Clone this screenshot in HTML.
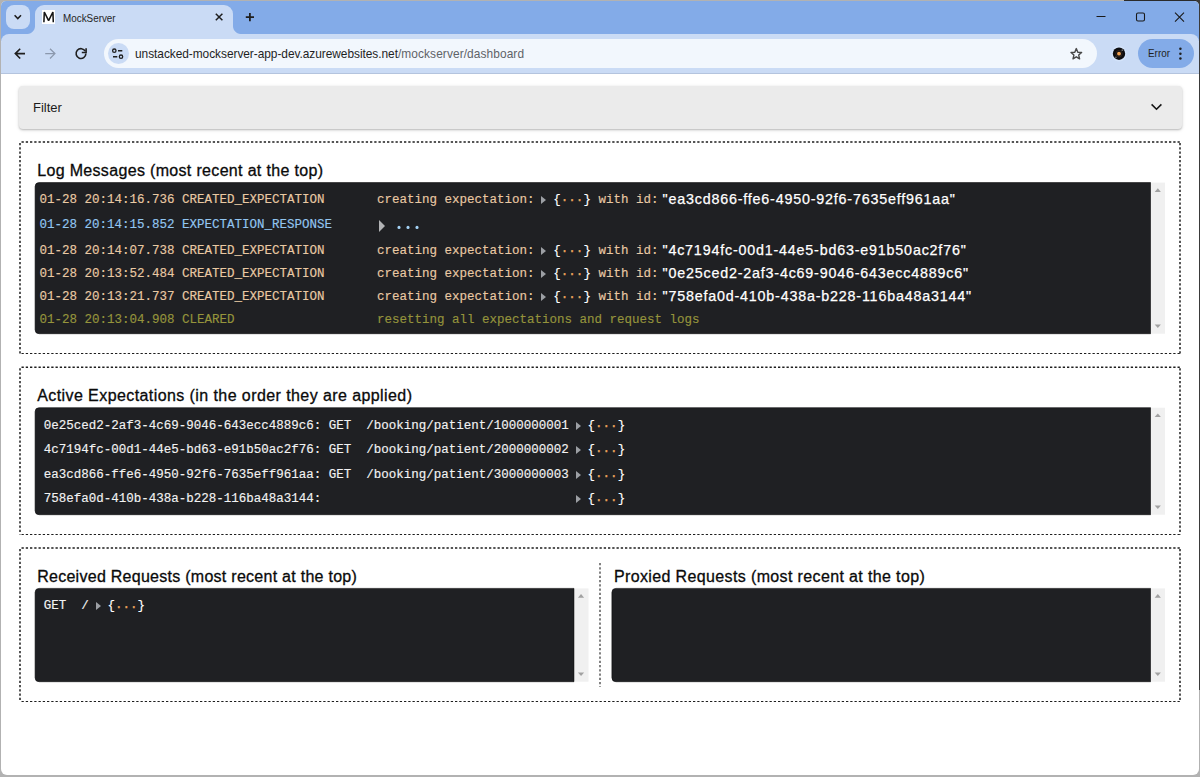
<!DOCTYPE html>
<html>
<head>
<meta charset="utf-8">
<title>MockServer</title>
<style>
*{box-sizing:border-box;margin:0;padding:0}
html,body{width:1200px;height:777px;overflow:hidden;background:#b2b2b2;font-family:"Liberation Sans",sans-serif;}
#win{position:absolute;left:1px;top:1px;width:1198px;height:774px;background:#fff;border-radius:5px 5px 6px 6px;overflow:hidden}
#strip{position:absolute;left:0;top:0;width:1198px;height:40px;background:#83abe8}
#toolbar{position:absolute;left:0;top:33px;width:1198px;height:39px;background:#cadbf5;border-radius:8px 8px 0 0}
#tbline{position:absolute;left:0;top:72px;width:1198px;height:1px;background:#b4c4de}
.abs{position:absolute}
#tabsearch{left:5px;top:4px;width:24px;height:24px;border-radius:8px;background:#cadbf5}
#tab{left:34px;top:4px;width:198px;height:30px;background:#cadbf5;border-radius:9px 9px 0 0}
#tabL{left:26px;top:25px;width:8px;height:8px;background:radial-gradient(circle at 0 0,rgba(0,0,0,0) 7.5px,#cadbf5 8.5px)}
#tabR{left:232px;top:25px;width:8px;height:8px;background:radial-gradient(circle at 100% 0,rgba(0,0,0,0) 7.5px,#cadbf5 8.5px)}
#fav{left:41px;top:9px;width:13px;height:14px;background:#fff}
#tabtitle{left:62px;top:9.5px;font-size:11.5px;color:#262626;line-height:14px;white-space:nowrap;transform:scaleX(.858);transform-origin:0 0}
#omni{left:103px;top:38px;width:993px;height:29px;border-radius:15px;background:#f2f7fd}
#siteinfo{left:107px;top:42px;width:21px;height:21px;border-radius:11px;background:#cadbf5}
#url{left:134px;top:45px;font-size:13px;line-height:16px;color:#1f1f1f;white-space:nowrap;transform:scaleX(.915);transform-origin:0 0}
#url span{color:#5f6368}
#errpill{left:1137px;top:38px;width:56px;height:29px;border-radius:15px;background:#83abe8}
#errtxt{left:1146.8px;top:45px;font-size:11px;line-height:14px;color:#1f1f1f;transform:scaleX(.9);transform-origin:0 0}
svg{position:absolute;overflow:visible}

/* page */
#filter{left:18px;top:85px;width:1162.5px;height:43px;background:#ebebeb;border-radius:4px;box-shadow:0 1px 2px rgba(0,0,0,.22),0 1px 4px rgba(0,0,0,.10)}
#filter div{position:absolute;left:14px;top:14px;font-size:13px;line-height:16px;color:#1c1c1c}
.sec{position:absolute;left:19px;width:1161px;border:1px dashed #222}
.ttl{position:absolute;font-size:16px;line-height:20px;color:#0a0a0a;white-space:nowrap;-webkit-text-stroke:0.3px #0a0a0a}
.box{position:absolute;background:#1f2023;border-radius:4px 0 0 4px}
.sb{position:absolute;width:15px;background:#f0f0f0}
.mono{font-family:"Liberation Mono",monospace;font-size:12.5px;line-height:15px;white-space:pre;position:absolute;margin-top:1px;-webkit-text-stroke:0.15px currentColor}
.c1{color:#e9c9a3}.c2{color:#92c5f0}.c3{color:#95943c}.w{color:#f2f2f2}
.id{font-family:"Liberation Sans",sans-serif;font-size:14.3px;color:#fff;position:absolute;white-space:pre;line-height:18px;letter-spacing:.81px;-webkit-text-stroke:0.25px #fff}
.tri{position:absolute;width:0;height:0;border-left:5px solid #8a8a8a;border-top:4px solid transparent;border-bottom:4px solid transparent}
.t{display:inline-block;width:18.75px;height:9px;position:relative;vertical-align:-1px}.t:after{content:"";position:absolute;left:6.75px;top:1.2px;border-left:5px solid #9c9fa4;border-top:4px solid transparent;border-bottom:4px solid transparent}
.br{color:#fff}.dot{color:#eba55c;position:relative;top:-1.3px;-webkit-text-stroke:0.3px #eba55c}
</style>
</head>
<body>
<div style="position:absolute;left:1124px;top:0;width:76px;height:8px;background:#2b2b2b"></div>
<div style="position:absolute;left:1196px;top:0;width:4px;height:690px;background:#3a3a3a"></div>
<div id="win">
  <div id="strip"></div>
  <div id="toolbar"></div>
  <div id="tbline"></div>
  <div id="tabsearch" class="abs"></div>
  <div id="tab" class="abs"></div><div id="tabL" class="abs"></div><div id="tabR" class="abs"></div>
  <div id="fav" class="abs"></div>
  <div id="tabtitle" class="abs">MockServer</div>
  <div id="omni" class="abs"></div>
  <div id="siteinfo" class="abs"></div>
  <div id="url" class="abs"><b style="font-weight:normal;letter-spacing:-.047px">unstacked-mockserver-app-dev.azurewebsites.net</b><span style="letter-spacing:.1px">/mockserver/dashboard</span></div>
  <div id="errpill" class="abs"></div>
  <div id="errtxt" class="abs">Error</div>

  <svg class="abs" style="left:-1px;top:-1px" width="1200" height="80" viewBox="0 0 1200 80" fill="none" stroke-linecap="butt">
    <!-- tab search chevron -->
    <path d="M14.6 15.3 L17.8 18.5 L21 15.3" stroke="#1f1f1f" stroke-width="1.6"/>
    <!-- favicon M -->
    <path d="M43.9 22.3 L44.3 12 L48.6 20.6 L52.9 12 L53.3 22.3" stroke="#151515" stroke-width="1.55" stroke-linejoin="bevel"/>
    <!-- tab close -->
    <path d="M215.8 13.7 L222.4 20.3 M222.4 13.7 L215.8 20.3" stroke="#1f1f1f" stroke-width="1.5"/>
    <!-- new tab plus -->
    <path d="M245.8 17.1 H254 M249.9 13 V21.2" stroke="#1f1f1f" stroke-width="1.8"/>
    <!-- back -->
    <path d="M25 53.6 H16 M20.2 48.7 L15.3 53.6 L20.2 58.5" stroke="#1f1f1f" stroke-width="1.6"/>
    <!-- forward -->
    <path d="M45.2 53.6 H54.2 M50 48.7 L54.9 53.6 L50 58.5" stroke="#8b98ad" stroke-width="1.3"/>
    <!-- reload -->
    <path d="M85.3 51.2 A4.9 4.9 0 1 0 85.9 53.6" stroke="#1f1f1f" stroke-width="1.6"/>
    <path d="M86.1 48.2 V52.5 H81.8" stroke="#1f1f1f" stroke-width="1.6"/>
    <!-- site info -->
    <circle cx="114.3" cy="50.7" r="1.7" stroke="#1f1f1f" stroke-width="1.3"/>
    <path d="M118 50.7 H122.3" stroke="#1f1f1f" stroke-width="1.4"/>
    <circle cx="121" cy="56.7" r="1.7" stroke="#1f1f1f" stroke-width="1.3"/>
    <path d="M113 56.7 H117.3" stroke="#1f1f1f" stroke-width="1.4"/>
    <!-- star -->
    <path d="M1076.3 48.6 L1077.8 52.2 L1081.6 52.5 L1078.7 55.1 L1079.6 58.8 L1076.3 56.8 L1073 58.8 L1073.9 55.1 L1071 52.5 L1074.8 52.2 Z" stroke="#474747" stroke-width="1.4" stroke-linejoin="round"/>
    <!-- avatar -->
    <circle cx="1119" cy="53.7" r="7.7" fill="#d3e3fa"/>
    <circle cx="1119" cy="53.7" r="6.2" fill="#0d0d0f"/>
    <circle cx="1122.3" cy="50.2" r="0.9" fill="#6a6a6a"/><circle cx="1115.9" cy="57.3" r="0.9" fill="#6a6a6a"/>
    <circle cx="1119" cy="53.7" r="3.2" fill="none" stroke="#3a2a20" stroke-width="0.8"/>
    <circle cx="1119" cy="53.7" r="1.9" fill="#f0a050"/>
    <!-- dots -->
    <circle cx="1180.4" cy="48.8" r="1.25" fill="#1f1f1f"/><circle cx="1180.4" cy="53.7" r="1.25" fill="#1f1f1f"/><circle cx="1180.4" cy="58.5" r="1.25" fill="#1f1f1f"/>
    <!-- window controls -->
    <path d="M1096.5 16.5 H1105.5" stroke="#1a1a1a" stroke-width="1"/>
    <rect x="1136.5" y="13" width="8" height="8" rx="1.5" stroke="#1a1a1a" stroke-width="1.1"/>
    <path d="M1175 12.7 L1184 21.7 M1184 12.7 L1175 21.7" stroke="#1a1a1a" stroke-width="1.1"/>
  </svg>

  <!-- PAGE -->
  <div id="filter" class="abs"><div>Filter</div></div>
  <div class="ttl" style="left:36.2px;top:160px;letter-spacing:.33px">Log Messages (most recent at the top)</div>
  <div class="ttl" style="left:36.2px;top:385px;letter-spacing:.417px">Active Expectations (in the order they are applied)</div>
  <div class="ttl" style="left:36.2px;top:566px;letter-spacing:.27px">Received Requests (most recent at the top)</div>
  <div class="ttl" style="left:613px;top:566px;letter-spacing:.365px">Proxied Requests (most recent at the top)</div>

  <svg class="abs" style="left:-1px;top:-1px" width="1200" height="777" viewBox="0 0 1200 777">
    <path d="M39.1 182.6 H1150.6 V333.7 H39.1 A4 4 0 0 1 35.1 329.7 V186.6 A4 4 0 0 1 39.1 182.6 Z" fill="#1f2023" stroke="#0a0a0b" stroke-width="0.6"/>
    <rect x="1152" y="182.6" width="13" height="151.1" fill="#f0f0f0"/><path d="M1154.70 191.90 L1157.80 188.30 L1160.90 191.90 Z" fill="#a1a1a1"/><path d="M1154.70 324.40 L1157.80 328.00 L1160.90 324.40 Z" fill="#a1a1a1"/>
    <path d="M39.1 407.7 H1150.6 V514.7 H39.1 A4 4 0 0 1 35.1 510.70000000000005 V411.7 A4 4 0 0 1 39.1 407.7 Z" fill="#1f2023" stroke="#0a0a0b" stroke-width="0.6"/>
    <rect x="1152" y="407.7" width="13" height="107.0" fill="#f0f0f0"/><path d="M1154.70 417.00 L1157.80 413.40 L1160.90 417.00 Z" fill="#a1a1a1"/><path d="M1154.70 505.40 L1157.80 509.00 L1160.90 505.40 Z" fill="#a1a1a1"/>
    <path d="M39.1 588.4 H574 V681.7 H39.1 A4 4 0 0 1 35.1 677.7 V592.4 A4 4 0 0 1 39.1 588.4 Z" fill="#1f2023" stroke="#0a0a0b" stroke-width="0.6"/>
    <rect x="575.0" y="588.4" width="13.5" height="93.3" fill="#f0f0f0"/><path d="M577.95 597.70 L581.05 594.10 L584.15 597.70 Z" fill="#a1a1a1"/><path d="M577.95 672.40 L581.05 676.00 L584.15 672.40 Z" fill="#a1a1a1"/>
    <path d="M615.9 588.4 H1150.6 V681.7 H615.9 A4 4 0 0 1 611.9 677.7 V592.4 A4 4 0 0 1 615.9 588.4 Z" fill="#1f2023" stroke="#0a0a0b" stroke-width="0.6"/>
    <rect x="1152" y="588.4" width="13" height="93.3" fill="#f0f0f0"/><path d="M1154.70 597.70 L1157.80 594.10 L1160.90 597.70 Z" fill="#a1a1a1"/><path d="M1154.70 672.40 L1157.80 676.00 L1160.90 672.40 Z" fill="#a1a1a1"/>
  </svg>
  <svg class="abs" style="left:-1px;top:-1px" width="1200" height="777" viewBox="0 0 1200 777" fill="none" stroke="#1e1e1e" stroke-width="1.1" stroke-dasharray="2.3 1.95">
    <path stroke-width="1.5" d="M21.5 142 H1180 M20 143 V353.5 M1180 143 V353.5 M21.5 367.2 H1180 M20 368.2 V534.5 M1180 368.2 V534.5 M21.5 548 H1180 M20 549 V701.5 M1180 549 V701.5"/>
    <path stroke-width="1.1" d="M21.5 353.5 H1180 M21.5 534.5 H1180 M21.5 701.5 H1180"/>
    <path d="M600 563 V687" stroke="#5a5a5a" stroke-width="1.5"/>
    <path d="M1151.6 104.4 L1156.5 109.2 L1161.4 104.4" stroke="#151515" stroke-width="1.6" stroke-dasharray="none"/>
  </svg>
  <!-- ROWS -->
  <div class="mono c1" style="left:38.5px;top:190.5px">01-28 20:14:16.736 CREATED_EXPECTATION       creating expectation:<i class="t"></i><span class="br">{</span><span class="dot">...</span><span class="br">}</span> with id:</div>
  <div class="id" style="left:661.5px;top:189px">"ea3cd866-ffe6-4950-92f6-7635eff961aa"</div>
  <div class="mono c2" style="left:38.5px;top:216.0px">01-28 20:14:15.852 EXPECTATION_RESPONSE</div>
  <div class="abs" style="left:377.7px;top:219px;width:0;height:0;border-left:6.75px solid #b2b3b5;border-top:6.1px solid transparent;border-bottom:6.1px solid transparent"></div>
  <svg class="abs" style="left:-1px;top:-1px" width="430" height="240"><circle cx="399" cy="227.4" r="1.55" fill="#a3d2f6"/><circle cx="408" cy="227.4" r="1.55" fill="#a3d2f6"/><circle cx="417" cy="227.4" r="1.55" fill="#a3d2f6"/></svg>
  <div class="mono c1" style="left:38.5px;top:241.5px">01-28 20:14:07.738 CREATED_EXPECTATION       creating expectation:<i class="t"></i><span class="br">{</span><span class="dot">...</span><span class="br">}</span> with id:</div>
  <div class="id" style="left:661.5px;top:240px">"4c7194fc-00d1-44e5-bd63-e91b50ac2f76"</div>
  <div class="mono c1" style="left:38.5px;top:264.5px">01-28 20:13:52.484 CREATED_EXPECTATION       creating expectation:<i class="t"></i><span class="br">{</span><span class="dot">...</span><span class="br">}</span> with id:</div>
  <div class="id" style="left:661.5px;top:263px">"0e25ced2-2af3-4c69-9046-643ecc4889c6"</div>
  <div class="mono c1" style="left:38.5px;top:287.5px">01-28 20:13:21.737 CREATED_EXPECTATION       creating expectation:<i class="t"></i><span class="br">{</span><span class="dot">...</span><span class="br">}</span> with id:</div>
  <div class="id" style="left:661.5px;top:286px">"758efa0d-410b-438a-b228-116ba48a3144"</div>
  <div class="mono c3" style="left:38.5px;top:310.5px">01-28 20:13:04.908 CLEARED                   resetting all expectations and request logs</div>
  <div class="mono w" style="left:42.75px;top:416.5px">0e25ced2-2af3-4c69-9046-643ecc4889c6: GET  /booking/patient/1000000001<i class="t"></i><span class="br">{</span><span class="dot">...</span><span class="br">}</span></div>
  <div class="mono w" style="left:42.75px;top:441.0px">4c7194fc-00d1-44e5-bd63-e91b50ac2f76: GET  /booking/patient/2000000002<i class="t"></i><span class="br">{</span><span class="dot">...</span><span class="br">}</span></div>
  <div class="mono w" style="left:42.75px;top:465.8px">ea3cd866-ffe6-4950-92f6-7635eff961aa: GET  /booking/patient/3000000003<i class="t"></i><span class="br">{</span><span class="dot">...</span><span class="br">}</span></div>
  <div class="mono w" style="left:42.75px;top:490.3px">758efa0d-410b-438a-b228-116ba48a3144:                                 <i class="t"></i><span class="br">{</span><span class="dot">...</span><span class="br">}</span></div>
  <div class="mono w" style="left:42.75px;top:597.2px">GET  /<i class="t"></i><span class="br">{</span><span class="dot">...</span><span class="br">}</span></div>
</div>
</body>
</html>
